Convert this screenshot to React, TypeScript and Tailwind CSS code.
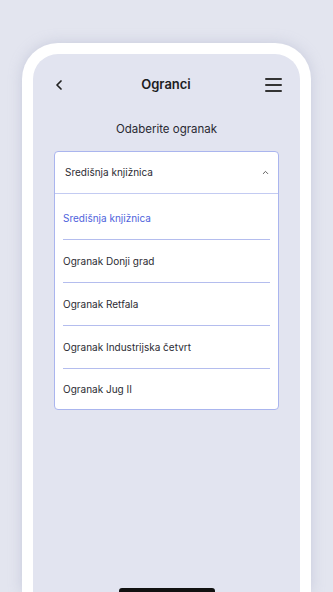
import { ChevronLeft, ChevronUp } from "lucide-react";

const branches = [
  "Središnja knjižnica",
  "Ogranak Donji grad",
  "Ogranak Retfala",
  "Ogranak Industrijska četvrt",
  "Ogranak Jug II",
];

const App = () => {
  const selected = 0;
  return (
    <div
      className="w-[333px] h-[592px] overflow-hidden bg-[#e3e5ef] pt-[43px] px-[22px]"
      style={{ fontFamily: "Inter, 'Noto Sans', sans-serif" }}
    >
      <div className="h-full bg-white rounded-t-[36px] px-[11px] pt-[11px] shadow-[0_0_14px_rgba(150,155,185,0.35)]">
        <div className="h-full bg-[#e2e4f0] rounded-t-[25px] flex flex-col">
          <header className="flex items-center justify-between pl-[18px] pr-[18px] pt-[10px] h-[42px] box-content">
            <ChevronLeft className="w-[16px] h-[16px] text-[#222]" strokeWidth={2.6} />
            <h1 className="text-[13px] font-semibold text-[#1c1c22]">Ogranci</h1>
            <div className="flex flex-col gap-[4px] w-[17px]">
              <span className="h-[2px] bg-[#333] rounded" />
              <span className="h-[2px] bg-[#333] rounded" />
              <span className="h-[2px] bg-[#333] rounded" />
            </div>
          </header>

          <p className="text-center text-[11.5px] text-[#2a2a33] mt-[15px]">Odaberite ogranak</p>

          <div className="mx-[21px] mt-[13px] bg-white border border-[#aab5ee] rounded-[4px]">
            <div className="flex items-center justify-between h-[42px] pl-[10px] pr-[8px] border-b border-[#c3cbf2]">
              <span className="text-[10px] text-[#2b2b33]">Središnja knjižnica</span>
              <ChevronUp className="w-[9px] h-[9px] text-[#555]" strokeWidth={2.5} />
            </div>
            <ul className="px-[8px] pt-[3px]">
              {branches.map((b, i) => (
                <li
                  key={b}
                  className={`flex items-center text-[10px] ${
                    i < branches.length - 1 ? "h-[43px] border-b border-[#b4bdee]" : "h-[40px]"
                  } ${i === selected ? "text-[#4e63dc]" : "text-[#2b2b33]"}`}
                >
                  {b}
                </li>
              ))}
            </ul>
          </div>

          <div className="mt-auto mx-auto w-[96px] h-[6px] bg-[#111] rounded-full translate-y-[2px]" />
        </div>
      </div>
    </div>
  );
};

export default App;
